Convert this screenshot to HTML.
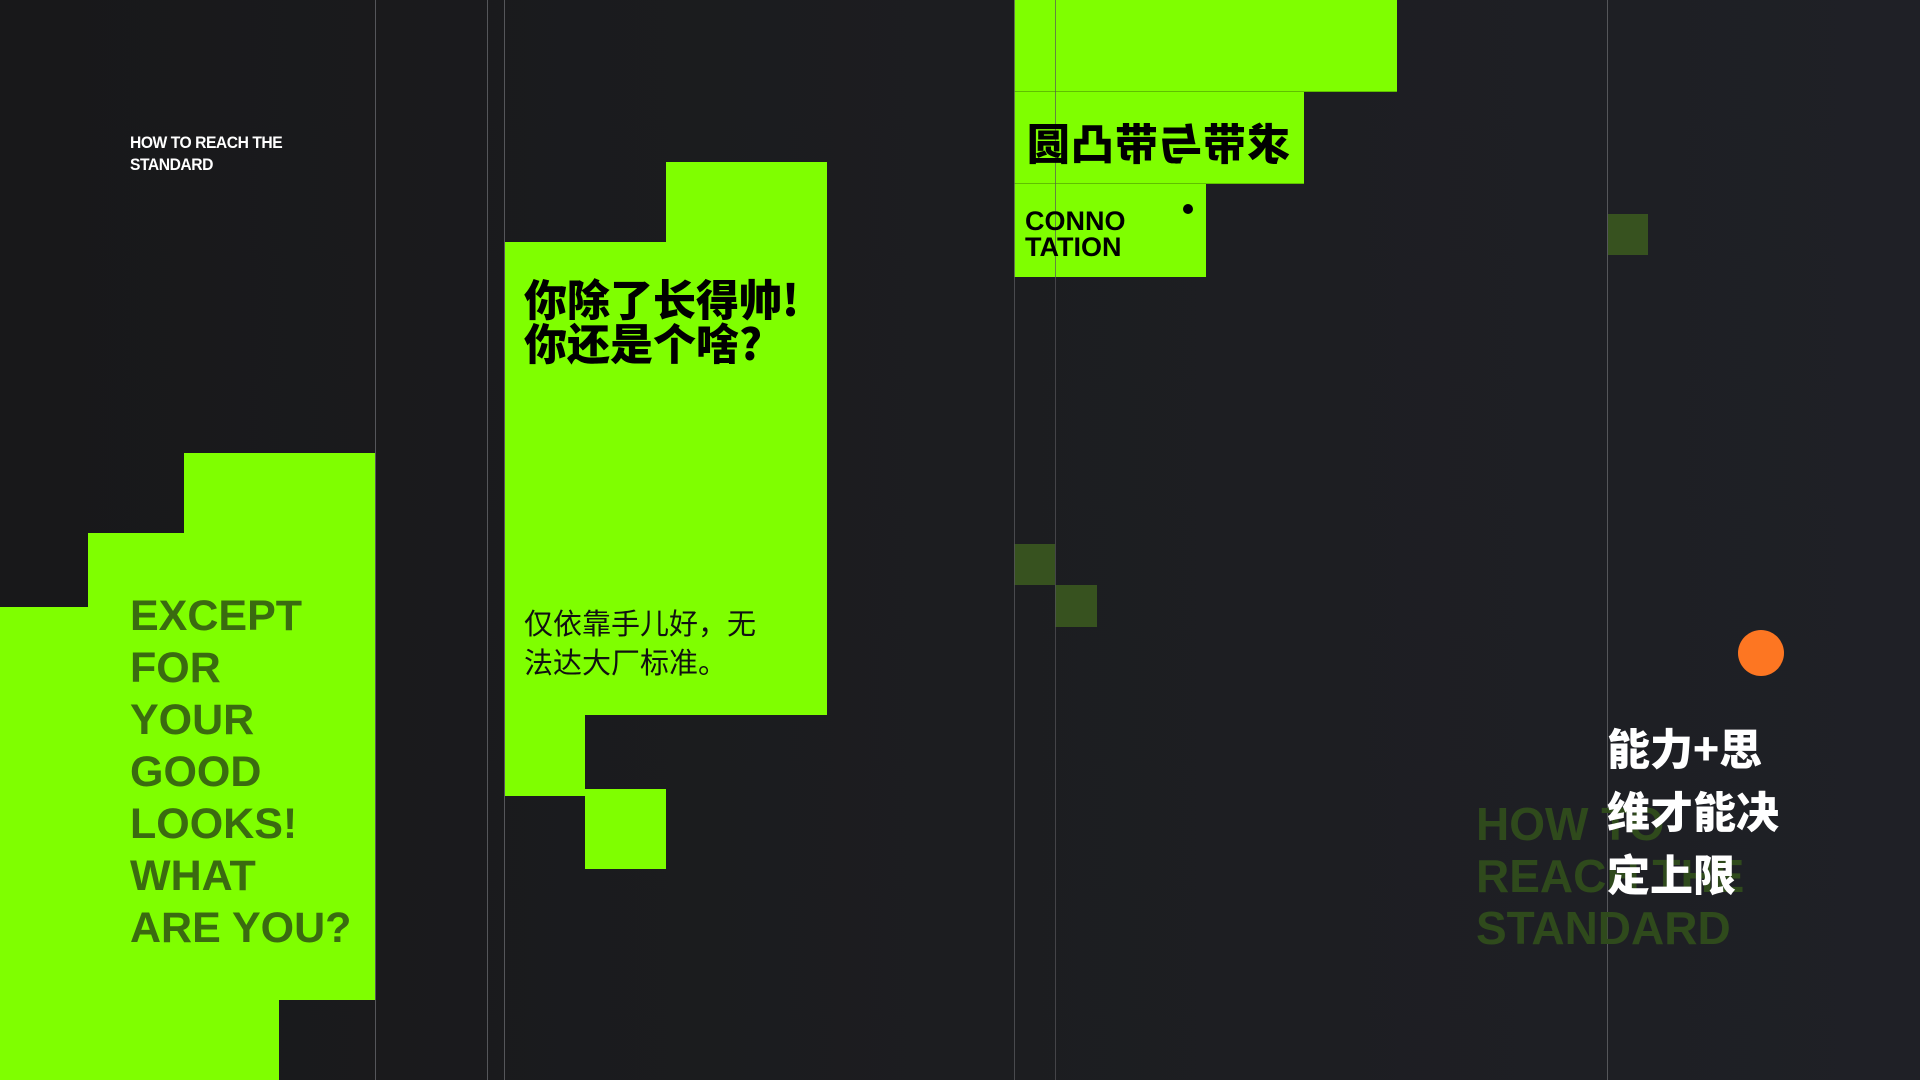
<!DOCTYPE html>
<html><head><meta charset="utf-8"><style>
*{margin:0;padding:0;box-sizing:border-box}
html,body{width:1920px;height:1080px;overflow:hidden}
body{background:linear-gradient(90deg,#18181a 0%,#1c1d20 50%,#1f2026 100%);position:relative;font-family:"Liberation Sans","Noto Sans CJK SC",sans-serif}
.a{position:absolute}
.g{background:#7fff00}
.l{position:absolute;top:0;width:1px;height:1080px;background:#55565a}
.d{background:#37521f}
</style></head><body>
<div class="a g" style="left:0;top:607px;width:88px;height:473px"></div>
<div class="a g" style="left:88px;top:533px;width:96px;height:547px"></div>
<div class="a g" style="left:184px;top:453px;width:95px;height:627px"></div>
<div class="a g" style="left:279px;top:453px;width:96px;height:547px"></div>
<div class="a g" style="left:504px;top:242px;width:323px;height:473px"></div>
<div class="a g" style="left:666px;top:162px;width:161px;height:81px"></div>
<div class="a g" style="left:504px;top:714px;width:81px;height:82px"></div>
<div class="a g" style="left:585px;top:789px;width:81px;height:80px"></div>
<div class="a g" style="left:1014px;top:0;width:383px;height:92px;border-bottom:1px solid #5fc000"></div>
<div class="a g" style="left:1014px;top:92px;width:290px;height:92px;border-bottom:1px solid #5fc000"></div>
<div class="a g" style="left:1014px;top:184px;width:192px;height:93px"></div>
<div class="a d" style="left:1014px;top:544px;width:41px;height:41px"></div>
<div class="a d" style="left:1055px;top:585px;width:42px;height:42px"></div>
<div class="a d" style="left:1607px;top:214px;width:41px;height:41px"></div>
<div class="l" style="left:375px"></div>
<div class="l" style="left:487px"></div>
<div class="l" style="left:504px"></div>
<div class="l" style="left:1014px;opacity:.8"></div>
<div class="l" style="left:1055px;opacity:.7"></div>
<div class="l" style="left:1607px"></div>

<div class="a" style="left:130px;top:132px;color:#fff;font-weight:bold;font-size:17px;line-height:22px;letter-spacing:-0.5px;transform:scaleX(0.92);transform-origin:left top">HOW TO REACH THE<br>STANDARD</div>

<div class="a" style="left:130px;top:590px;color:#3a6b10;font-weight:900;font-size:43px;line-height:52px">EXCEPT<br>FOR<br>YOUR<br>GOOD<br>LOOKS!<br>WHAT<br>ARE YOU?</div>

<div class="a" style="left:524px;top:276px;color:#000;font-weight:900;font-size:43px;line-height:44px;font-family:'Noto Sans CJK SC',sans-serif">你除了长得帅!<br>你还是个啥?</div>
<div class="a" style="left:524px;top:606px;color:#111;font-size:29px;line-height:39px;font-family:'Liberation Sans','Noto Sans CJK SC',sans-serif">仅依靠手儿好，无<br>法达大厂标准。</div>

<div class="a" style="left:1024px;top:116px;width:266px;color:#000;font-weight:900;font-size:43px;line-height:52px;font-family:'Noto Sans CJK SC',sans-serif;transform:scaleX(-1);white-space:nowrap;letter-spacing:1px">求带与带凸圆</div>
<div class="a" style="left:1025px;top:208px;color:#000;font-weight:bold;font-size:27px;line-height:26px">CONNO<br>TATION</div>
<div class="a" style="left:1183px;top:204px;width:10px;height:10px;border-radius:50%;background:#000"></div>

<div class="a" style="left:1738px;top:630px;width:46px;height:46px;border-radius:50%;background:#fd7622"></div>

<div class="a" style="left:1476px;top:798px;color:#2f4a1c;font-weight:900;font-size:46px;line-height:52px">HOW TO<br>REACH THE<br>STANDARD</div>
<div class="a" style="left:1607px;top:716px;color:#fff;font-weight:900;font-size:43px;line-height:63px;font-family:'Noto Sans CJK SC',sans-serif">能力+思<br>维才能决<br>定上限</div>
</body></html>
